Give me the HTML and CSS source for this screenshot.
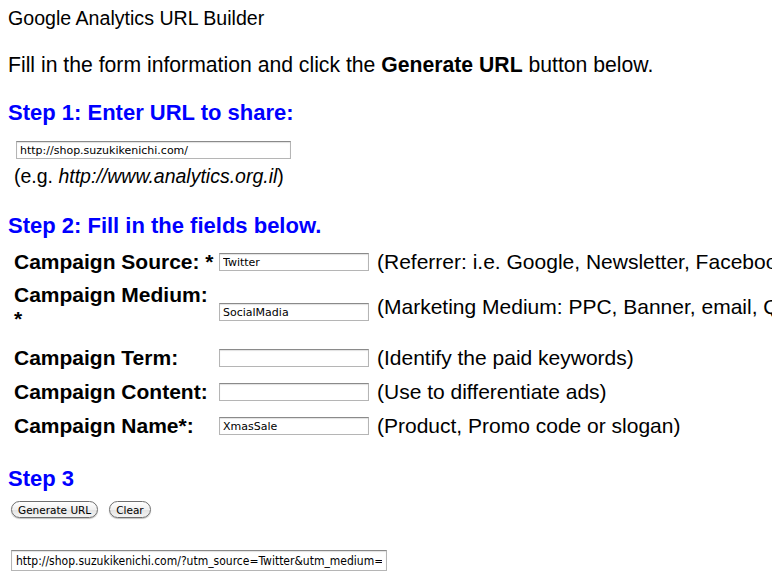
FILE: index.html
```html
<!DOCTYPE html>
<html lang="en">
<head>
<meta charset="UTF-8">
<title>Google Analytics URL Builder</title>
<link rel="stylesheet" href="styles.css">
</head>
<body>
<div class="title">Google Analytics URL Builder</div>
<p class="intro">Fill in the form information and click the <b>Generate URL</b> button below.</p>

<h2 class="step">Step 1: Enter URL to share:</h2>
<div class="url-box">
  <input type="text" class="url-input" value="http://shop.suzukikenichi.com/">
  <div class="example">(e.g. <i>http://www.analytics.org.il</i>)</div>
</div>

<h2 class="step step2">Step 2: Fill in the fields below.</h2>
<div class="fields">
  <div class="row">
    <div class="label">Campaign Source: *</div>
    <input type="text" value="Twitter">
    <div class="hint">(Referrer: i.e. Google, Newsletter, Facebook, Twitter)</div>
  </div>
  <div class="row tall">
    <div class="label">Campaign Medium: *</div>
    <input type="text" value="SocialMadia">
    <div class="hint">(Marketing Medium: PPC, Banner, email, QR code)</div>
  </div>
  <div class="row">
    <div class="label">Campaign Term:</div>
    <input type="text" value="">
    <div class="hint">(Identify the paid keywords)</div>
  </div>
  <div class="row">
    <div class="label">Campaign Content:</div>
    <input type="text" value="">
    <div class="hint">(Use to differentiate ads)</div>
  </div>
  <div class="row">
    <div class="label">Campaign Name*:</div>
    <input type="text" value="XmasSale">
    <div class="hint">(Product, Promo code or slogan)</div>
  </div>
</div>

<h2 class="step step3">Step 3</h2>
<div class="buttons">
  <button type="button">Generate URL</button>
  <button type="button">Clear</button>
</div>

<input type="text" class="result" value="http://shop.suzukikenichi.com/?utm_source=Twitter&amp;utm_medium=SocialMadia&amp;utm_campaign=XmasSale">
</body>
</html>
```

FILE: styles.css
```css
/* URL builder page */
html {
  overflow: hidden;
}

body {
  font-family: 'Liberation Sans', Arial, sans-serif;
  margin: 8px;
  color: #000;
  background: #fff;
}

.title {
  font-size: 19.6px;
  line-height: 20px;
}

.intro {
  font-size: 21.2px;
  line-height: 24px;
  margin: 25px 0 0 0;
}

.step {
  color: #0000ff;
  font-size: 22px;
  line-height: 24px;
  margin: 24px 0 0 0;
}

.url-box {
  padding-left: 8px;
  margin-top: 15px;
}

input[type="text"] {
  font-family: 'DejaVu Sans', sans-serif;
  font-size: 11px;
  border: 1px solid #b5b5b5;
  border-top-color: #8a8a8a;
  box-shadow: inset 0 1px 1px rgba(0, 0, 0, 0.12);
  padding: 1px 3px 0;
  height: 18px;
  box-sizing: border-box;
  margin: 0;
  color: #000;
}

.url-input {
  width: 275px;
}

.example {
  font-size: 19.5px;
  line-height: 24px;
  margin-top: 5px;
  margin-left: -2px;
}

.step2 {
  margin-top: 26px;
}

.fields {
  margin-left: 6px;
  margin-top: 7px;
  white-space: nowrap;
}

.row {
  display: grid;
  grid-template-columns: 205px 150px auto;
  align-items: center;
  min-height: 34px;
}

.label {
  font-size: 21px;
  font-weight: bold;
  line-height: 24px;
  white-space: normal;
}

.tall {
  padding: 4px 0 10px;
}

.tall input {
  margin-top: 10px;
}

.hint {
  font-size: 21px;
  line-height: 24px;
  padding-left: 8px;
}

.step3 {
  margin-top: 24px;
}

.buttons {
  margin-top: 10px;
  padding-left: 3px;
  display: flex;
  gap: 11px;
}

.buttons button {
  font-family: 'DejaVu Sans', sans-serif;
  font-size: 10.5px;
  height: 17px;
  padding: 0 6px;
  border: 1px solid #6f6f6f;
  border-radius: 9px;
  background: linear-gradient(#ffffff, #f0f0f0 50%, #e2e2e2 51%, #f4f4f4);
  box-shadow: 0 1px 1px rgba(0, 0, 0, 0.25);
  color: #000;
}

input.result {
  display: block;
  margin: 32px 0 0 3px;
  width: 376px;
  height: 21px;
  font-family: 'DejaVu Sans Condensed', 'DejaVu Sans', sans-serif;
  font-size: 12px;
  padding: 2px 4px;
}
```
